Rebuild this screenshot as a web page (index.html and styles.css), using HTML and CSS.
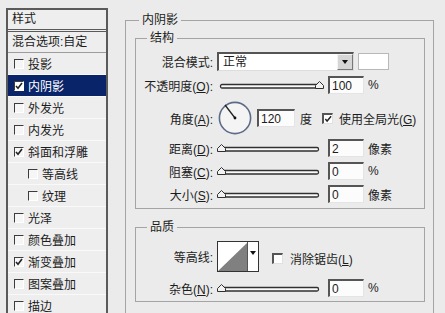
FILE: index.html
```html
<!DOCTYPE html>
<html lang="zh-CN">
<head>
    <meta charset="UTF-8">
    <meta name="viewport" content="width=device-width, initial-scale=1.0">
    <title>图层样式</title>
    <link rel="stylesheet" href="styles.css">
</head>
<body>
    <div class="dialog">
        <div class="styles-list">
            <div class="list-head">样式</div>
            <div class="list-blend">混合选项:自定</div>
            <div class="list-item"><span class="cb"></span>投影</div>
            <div class="list-item selected"><span class="cb"><svg viewBox="0 0 8 8"><path d="M1 4l2 2.2L7 1"/></svg></span>内阴影</div>
            <div class="list-item"><span class="cb"></span>外发光</div>
            <div class="list-item"><span class="cb"></span>内发光</div>
            <div class="list-item"><span class="cb"><svg viewBox="0 0 8 8"><path d="M1 4l2 2.2L7 1"/></svg></span>斜面和浮雕</div>
            <div class="list-item sub"><span class="cb"></span>等高线</div>
            <div class="list-item sub"><span class="cb"></span>纹理</div>
            <div class="list-item"><span class="cb"></span>光泽</div>
            <div class="list-item"><span class="cb"></span>颜色叠加</div>
            <div class="list-item"><span class="cb"><svg viewBox="0 0 8 8"><path d="M1 4l2 2.2L7 1"/></svg></span>渐变叠加</div>
            <div class="list-item"><span class="cb"></span>图案叠加</div>
            <div class="list-item"><span class="cb"></span>描边</div>
        </div>

        <div class="panel">
            <fieldset class="group outer">
                <legend>内阴影</legend>

                <fieldset class="group structure">
                    <legend>结构</legend>

                    <div class="row row-blend">
                        <span class="label">混合模式:</span>
                        <div class="select">
                            <span class="select-value">正常</span>
                            <span class="select-btn"></span>
                        </div>
                        <span class="swatch"></span>
                    </div>

                    <div class="row">
                        <span class="label">不透明度(<u>O</u>):</span>
                        <svg class="slider" width="107" height="18">
                            <rect x="3.5" y="8.5" width="98" height="3.5" rx="1.5"/>
                            <path class="thumb" transform="translate(98 0)" d="M0.5 12.5V9.5L4.5 5.5L8.5 9.5V12.5Z"/>
                        </svg>
                        <span class="field">100</span>
                        <span class="unit">%</span>
                    </div>

                    <div class="row row-angle">
                        <span class="label">角度(<u>A</u>):</span>
                        <svg class="dial" width="36" height="34">
                            <circle cx="18" cy="17" r="15.6"/>
                            <line x1="18" y1="17" x2="8" y2="4"/>
                            <circle class="hub" cx="18" cy="17" r="1.4"/>
                        </svg>
                        <span class="field angle">120</span>
                        <span class="unit deg">度</span>
                        <span class="check checked"><svg viewBox="0 0 9 9"><path d="M1.5 4.5l2 2.3L8 1.5"/></svg></span>
                        <span class="check-text">使用全局光(<u>G</u>)</span>
                    </div>

                    <div class="row row-tight">
                        <span class="label">距离(<u>D</u>):</span>
                        <svg class="slider" width="107" height="18">
                            <rect x="3.5" y="8.5" width="98" height="3.5" rx="1.5"/>
                            <path class="thumb" d="M0.5 12.5V9.5L4.5 5.5L8.5 9.5V12.5Z"/>
                        </svg>
                        <span class="field">2</span>
                        <span class="unit">像素</span>
                    </div>

                    <div class="row">
                        <span class="label">阻塞(<u>C</u>):</span>
                        <svg class="slider" width="107" height="18">
                            <rect x="3.5" y="8.5" width="98" height="3.5" rx="1.5"/>
                            <path class="thumb" d="M0.5 12.5V9.5L4.5 5.5L8.5 9.5V12.5Z"/>
                        </svg>
                        <span class="field">0</span>
                        <span class="unit">%</span>
                    </div>

                    <div class="row">
                        <span class="label">大小(<u>S</u>):</span>
                        <svg class="slider" width="107" height="18">
                            <rect x="3.5" y="8.5" width="98" height="3.5" rx="1.5"/>
                            <path class="thumb" d="M0.5 12.5V9.5L4.5 5.5L8.5 9.5V12.5Z"/>
                        </svg>
                        <span class="field">0</span>
                        <span class="unit">像素</span>
                    </div>
                </fieldset>

                <fieldset class="group quality">
                    <legend>品质</legend>

                    <div class="row row-contour">
                        <span class="label">等高线:</span>
                        <div class="contour">
                            <svg width="30" height="29"><path d="M0 29L30 0V29Z"/></svg>
                            <span class="contour-btn"></span>
                        </div>
                        <span class="check"></span>
                        <span class="check-text">消除锯齿(<u>L</u>)</span>
                    </div>

                    <div class="row row-noise">
                        <span class="label">杂色(<u>N</u>):</span>
                        <svg class="slider" width="107" height="18">
                            <rect x="3.5" y="8.5" width="98" height="3.5" rx="1.5"/>
                            <path class="thumb" d="M0.5 12.5V9.5L4.5 5.5L8.5 9.5V12.5Z"/>
                        </svg>
                        <span class="field">0</span>
                        <span class="unit">%</span>
                    </div>
                </fieldset>
            </fieldset>
        </div>
    </div>
</body>
</html>
```

FILE: styles.css
```css
* {
    box-sizing: border-box;
}
body {
    margin: 0;
    width: 445px;
    height: 313px;
    overflow: hidden;
    background: #ebebeb;
    font-family: "Liberation Sans", "Noto Sans CJK SC", sans-serif;
    font-size: 12px;
    color: #1c1c1c;
}
.dialog {
    display: flex;
    height: 100%;
    overflow: hidden;
    padding: 8px 0 0 6px;
}

/* left list of effects */
.styles-list {
    flex: none;
    width: 102px;
    border: 2px solid #5a5a5a;
    border-bottom: none;
    background: #eeeeee;
    overflow: hidden;
}
.list-head {
    height: 22px;
    line-height: 19px;
    padding-left: 4px;
    border-bottom: 3px double #5a5a5a;
}
.list-blend {
    height: 21px;
    line-height: 20px;
    padding-left: 4px;
    border-bottom: 1px solid #9c9c9c;
}
.list-item {
    height: 22px;
    display: flex;
    align-items: center;
    gap: 4px;
    padding-left: 6px;
    border-bottom: 1px solid #f9f9f9;
}
.list-item.sub {
    padding-left: 20px;
}
.list-item.selected {
    background: #0a246a;
    color: #fff;
}
.cb {
    width: 10px;
    height: 10px;
    flex: none;
    background: #f6f6f6;
    border-top: 1px solid #3c3c3c;
    border-left: 1px solid #3c3c3c;
    border-right: 1px solid #fff;
    border-bottom: 1px solid #fff;
}
.cb svg {
    display: block;
    width: 8px;
    height: 8px;
}
.cb path, .check path {
    fill: none;
    stroke: #222;
    stroke-width: 1.6;
}
.selected .cb {
    background: #fff;
}

/* right side */
.panel {
    flex: 1;
    padding: 4px 0 0 17px;
}
.group {
    margin: 0;
    border: 1px solid #a4a4a4;
}
.group legend {
    padding: 0 3px;
    line-height: 16px;
    height: 16px;
}
.outer {
    width: 309px;
    height: 312px;
    padding: 2px 0 0 9px;
}
.outer > legend {
    margin-left: 4px;
}
.structure, .quality {
    width: 290px;
    padding: 6px 0 5px 0;
}
.structure > legend, .quality > legend {
    margin-left: 11px;
}
.quality {
    margin-top: 10px;
    padding-bottom: 4px;
}

.row {
    display: flex;
    align-items: center;
    height: 18px;
    margin-top: 5px;
}
.row-blend {
    height: 19px;
    margin-top: 0;
}
.row-angle {
    height: 34px;
    margin-top: 7px;
}
.row-tight {
    margin-top: 4px;
}
.row-contour {
    height: 31px;
    margin-top: 0;
}
.row-noise {
    margin-top: 7px;
}
.label {
    flex: none;
    width: 77px;
    margin-right: 4px;
    text-align: right;
}

.select {
    display: flex;
    width: 137px;
    height: 19px;
    background: #fff;
    border-top: 2px solid #555;
    border-left: 2px solid #555;
    border-right: 1px solid #ddd;
    border-bottom: 1px solid #ddd;
}
.select-value {
    flex: 1;
    padding-left: 4px;
    line-height: 16px;
}
.select-btn {
    width: 16px;
    background: #d6d6d6;
    border-left: 1px solid #f4f4f4;
    border-top: 1px solid #f4f4f4;
    border-right: 1px solid #777;
    border-bottom: 1px solid #777;
    display: flex;
    align-items: center;
    justify-content: center;
}
.select-btn::after, .contour-btn::after {
    content: "";
    border-top: 4px solid #111;
    border-left: 3px solid transparent;
    border-right: 3px solid transparent;
}
.swatch {
    width: 31px;
    height: 17px;
    margin-left: 4px;
    background: #fff;
    border: 1px solid #b8b8b8;
}

.slider {
    flex: none;
    display: block;
}
.slider rect {
    fill: #fafafa;
    stroke: #303030;
    stroke-width: 1.3;
}
.slider .thumb {
    fill: #f2f2f2;
    stroke: #303030;
    stroke-width: 1;
}
.field {
    flex: none;
    width: 36px;
    height: 18px;
    margin-left: 4px;
    padding-left: 2px;
    line-height: 16px;
    background: #fcfcfc;
    border-top: 2px solid #555;
    border-left: 2px solid #555;
    border-right: 1px solid #e4e4e4;
    border-bottom: 1px solid #e4e4e4;
}
.field.angle {
    width: 38px;
}
.unit {
    margin-left: 4px;
}
.unit.deg {
    margin-left: 5px;
}

.dial {
    flex: none;
    display: block;
}
.dial circle {
    fill: #f4f4f4;
    stroke: #5b6b88;
    stroke-width: 1.6;
}
.dial line {
    stroke: #222;
    stroke-width: 1.3;
}
.dial .hub {
    fill: #111;
    stroke: none;
}

.check {
    flex: none;
    width: 11px;
    height: 11px;
    margin-left: 10px;
    background: #fff;
    border-top: 2px solid #555;
    border-left: 2px solid #555;
    border-right: 1px solid #e0e0e0;
    border-bottom: 1px solid #e0e0e0;
}
.check svg {
    display: block;
    width: 8px;
    height: 8px;
}
.check-text {
    margin-left: 6px;
}

.contour {
    flex: none;
    display: flex;
    width: 42px;
    height: 31px;
    border: 1px solid #333;
    background: #fff;
}
.contour svg {
    display: block;
    border-right: 1px solid #555;
}
.contour path {
    fill: #808080;
}
.contour-btn {
    flex: 1;
    display: flex;
    justify-content: center;
    padding-top: 9px;
}
.row-contour .check {
    margin-left: 13px;
    margin-top: 3px;
}
.row-contour .check-text {
    margin-left: 7px;
    margin-top: 3px;
}
```
